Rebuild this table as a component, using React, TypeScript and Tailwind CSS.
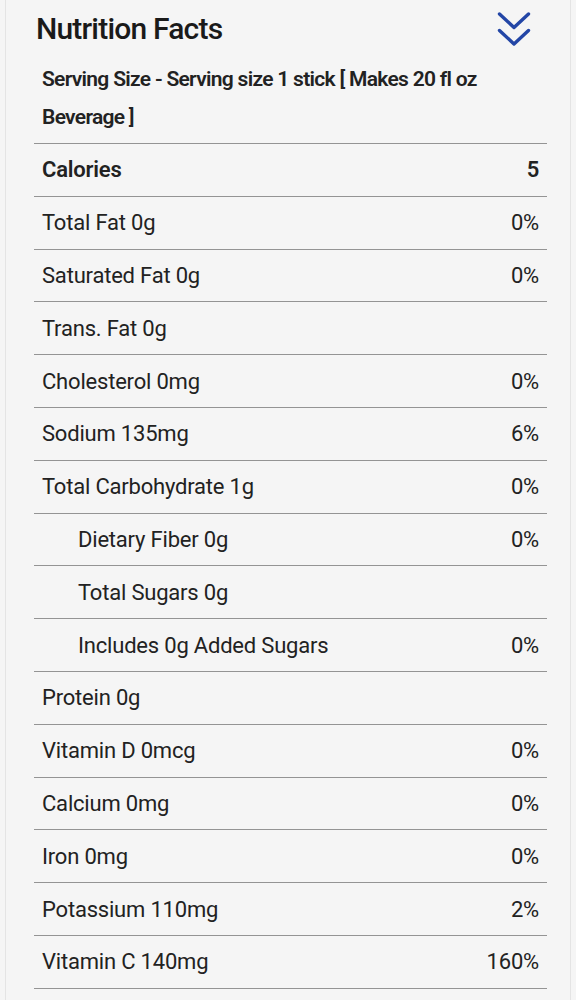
const rows: { label: string; value?: string; indent?: boolean; bold?: boolean }[] = [
  { label: 'Calories', value: '5', bold: true },
  { label: 'Total Fat 0g', value: '0%' },
  { label: 'Saturated Fat 0g', value: '0%' },
  { label: 'Trans. Fat 0g' },
  { label: 'Cholesterol 0mg', value: '0%' },
  { label: 'Sodium 135mg', value: '6%' },
  { label: 'Total Carbohydrate 1g', value: '0%' },
  { label: 'Dietary Fiber 0g', value: '0%', indent: true },
  { label: 'Total Sugars 0g', indent: true },
  { label: 'Includes 0g Added Sugars', value: '0%', indent: true },
  { label: 'Protein 0g' },
  { label: 'Vitamin D 0mcg', value: '0%' },
  { label: 'Calcium 0mg', value: '0%' },
  { label: 'Iron 0mg', value: '0%' },
  { label: 'Potassium 110mg', value: '2%' },
  { label: 'Vitamin C 140mg', value: '160%' },
]

function DoubleChevron() {
  return (
    <svg width="34" height="38" viewBox="0 0 34 38" fill="none">
      <path
        d="M2.5 4 L17 17.5 L31.5 4"
        stroke="#2346a6"
        strokeWidth="3.4"
        strokeLinecap="round"
        strokeLinejoin="round"
      />
      <path
        d="M2.5 20.5 L17 34 L31.5 20.5"
        stroke="#2346a6"
        strokeWidth="3.4"
        strokeLinecap="round"
        strokeLinejoin="round"
      />
    </svg>
  )
}

export default function App() {
  return (
    <div
      className="h-[1000px] w-[576px] overflow-hidden bg-[#f5f5f5] pl-[5px] pr-[5px] text-[#222]"
      style={{ fontFamily: 'Roboto, "Noto Sans", sans-serif' }}
    >
      <div className="h-full border-x border-[#e4e4e4] pl-[28px] pr-[23px]">
        {/* header */}
        <div className="flex h-[57px] items-center justify-between pl-[2px] pr-[16px]">
          <h1 className="text-[30px] font-medium tracking-[-0.8px] text-[#1a1a1a]">
            Nutrition Facts
          </h1>
          <DoubleChevron />
        </div>

        <p className="px-2 pb-[7px] pt-[3px] text-[21px] font-semibold leading-[38px] tracking-[-0.7px]">
          Serving Size - Serving size 1 stick [ Makes 20 fl oz Beverage ]
        </p>

        <div className="border-b border-[#949494]">
          {rows.map((r) => (
            <div
              key={r.label}
              className={`flex h-[52.8px] items-center justify-between border-t border-[#949494] pr-2 text-[22px] tracking-[-0.2px] ${
                r.indent ? 'pl-[44px]' : 'pl-2'
              } ${r.bold ? 'font-semibold' : 'font-normal'}`}
            >
              <span>{r.label}</span>
              {r.value && <span>{r.value}</span>}
            </div>
          ))}
        </div>
      </div>
    </div>
  )
}
